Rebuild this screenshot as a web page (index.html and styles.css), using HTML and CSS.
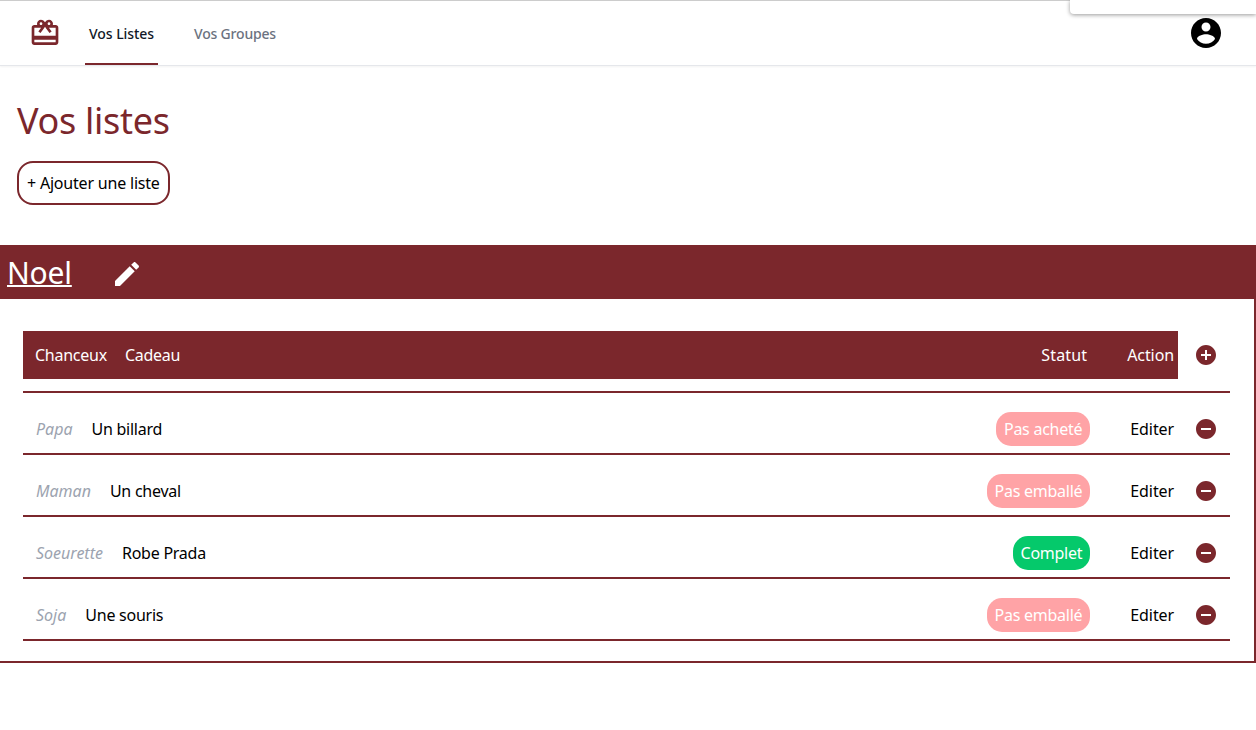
FILE: index.html
```html
<!DOCTYPE html>
<html lang="fr">
<head>
    <meta charset="UTF-8">
    <title>Vos listes</title>
    <link rel="stylesheet" href="styles.css">
</head>
<body>
    <div class="menu-popup"></div>

    <nav class="navbar">
        <svg class="logo" viewBox="0 0 24 24"><path d="M20 6h-2.18c.11-.31.18-.65.18-1 0-1.66-1.34-3-3-3-1.05 0-1.96.54-2.5 1.35l-.5.67-.5-.68C10.96 2.54 10.05 2 9 2 7.34 2 6 3.34 6 5c0 .35.07.69.18 1H4c-1.11 0-1.99.89-1.99 2L2 19c0 1.11.89 2 2 2h16c1.11 0 2-.89 2-2V8c0-1.11-.89-2-2-2zm-5-2c.55 0 1 .45 1 1s-.45 1-1 1-1-.45-1-1 .45-1 1-1zM9 4c.55 0 1 .45 1 1s-.45 1-1 1-1-.45-1-1 .45-1 1-1zm11 15H4v-2h16v2zm0-5H4V8h5.08L7 10.83 8.62 12 11 8.76l1-1.36 1 1.36L15.38 12 17 10.83 14.92 8H20v6z"/></svg>
        <a class="nav-link active" href="#">Vos Listes</a>
        <a class="nav-link" href="#">Vos Groupes</a>
        <svg class="account" viewBox="0 0 24 24"><path d="M12 2C6.48 2 2 6.48 2 12s4.48 10 10 10 10-4.48 10-10S17.52 2 12 2zm0 3c1.66 0 3 1.34 3 3s-1.34 3-3 3-3-1.34-3-3 1.34-3 3-3zm0 14.2c-2.5 0-4.71-1.28-6-3.22.03-1.99 4-3.08 6-3.08 1.99 0 5.97 1.09 6 3.08-1.29 1.94-3.5 3.22-6 3.22z"/></svg>
    </nav>

    <header class="page-head">
        <h1>Vos listes</h1>
        <button class="add-list">+ Ajouter une liste</button>
    </header>

    <section class="list">
        <div class="list-title">
            <a href="#">Noel</a>
            <svg class="edit" viewBox="0 0 24 24"><path d="M3 17.25V21h3.75L17.81 9.94l-3.75-3.75L3 17.25zM20.71 7.04c.39-.39.39-1.02 0-1.41l-2.34-2.34c-.39-.39-1.02-.39-1.41 0l-1.83 1.83 3.75 3.75 1.83-1.83z"/></svg>
        </div>
        <div class="list-body">
            <div class="head-line">
                <div class="table-head">
                    <span class="col-who">Chanceux</span>
                    <span class="col-gift">Cadeau</span>
                    <span class="col-status">Statut</span>
                    <span class="col-action">Action</span>
                </div>
                <svg class="round-icon" viewBox="0 0 24 24"><path d="M12 2C6.48 2 2 6.48 2 12s4.48 10 10 10 10-4.48 10-10S17.52 2 12 2zm5 11h-4v4h-2v-4H7v-2h4V7h2v4h4v2z"/></svg>
            </div>

            <div class="row">
                <span class="who">Papa</span>
                <span class="gift">Un billard</span>
                <span class="pill todo">Pas acheté</span>
                <a class="edit-link" href="#">Editer</a>
                <svg class="round-icon" viewBox="0 0 24 24"><path d="M12 2C6.48 2 2 6.48 2 12s4.48 10 10 10 10-4.48 10-10S17.52 2 12 2zm5 11H7v-2h10v2z"/></svg>
            </div>
            <div class="row">
                <span class="who">Maman</span>
                <span class="gift">Un cheval</span>
                <span class="pill todo">Pas emballé</span>
                <a class="edit-link" href="#">Editer</a>
                <svg class="round-icon" viewBox="0 0 24 24"><path d="M12 2C6.48 2 2 6.48 2 12s4.48 10 10 10 10-4.48 10-10S17.52 2 12 2zm5 11H7v-2h10v2z"/></svg>
            </div>
            <div class="row">
                <span class="who">Soeurette</span>
                <span class="gift">Robe Prada</span>
                <span class="pill done">Complet</span>
                <a class="edit-link" href="#">Editer</a>
                <svg class="round-icon" viewBox="0 0 24 24"><path d="M12 2C6.48 2 2 6.48 2 12s4.48 10 10 10 10-4.48 10-10S17.52 2 12 2zm5 11H7v-2h10v2z"/></svg>
            </div>
            <div class="row">
                <span class="who">Soja</span>
                <span class="gift">Une souris</span>
                <span class="pill todo">Pas emballé</span>
                <a class="edit-link" href="#">Editer</a>
                <svg class="round-icon" viewBox="0 0 24 24"><path d="M12 2C6.48 2 2 6.48 2 12s4.48 10 10 10 10-4.48 10-10S17.52 2 12 2zm5 11H7v-2h10v2z"/></svg>
            </div>
        </div>
    </section>
</body>
</html>
```

FILE: styles.css
```css
/* Base */
body { margin: 0; background-color: #fff; color: #000; font-family: "Noto Sans", sans-serif; font-size: 16px; letter-spacing: -0.25px; border-top: 1px solid #ccc; }
a { color: inherit; text-decoration: none; }

/* Navbar */
.navbar { display: flex; align-items: center; height: 64px; padding: 0 32px 0 29px; border-bottom: 1px solid #e5e7eb; box-shadow: 0 1px 2px rgba(0,0,0,0.05); }
.logo { width: 32px; height: 32px; fill: #7b272c; margin-right: 24px; }
.nav-link { display: flex; align-items: center; align-self: stretch; padding: 2px 4px 0; margin-right: 32px; border-bottom: 2px solid transparent; color: #6b7280; font-size: 14px; font-weight: 500; letter-spacing: -0.2px; }
.nav-link.active { color: #111827; border-bottom-color: #7b272c; letter-spacing: -0.05px; }
.account { width: 36px; height: 36px; margin-left: auto; fill: #000; }
.menu-popup { position: absolute; top: 0; right: 0; width: 186px; height: 14px; background-color: #fff; border-radius: 0 0 0 4px; box-shadow: 0 1px 4px rgba(0,0,0,0.4); }

/* Page head */
.page-head { padding: 30px 17px 40px; }
h1 { margin: 0 0 15px; color: #7b272c; font-size: 36px; font-weight: 400; line-height: 50px; letter-spacing: -0.3px; }
.add-list { display: block; height: 44px; padding: 0 8px; background-color: #fff; border: 2px solid #7b272c; border-radius: 16px; font-family: inherit; font-size: 16px; letter-spacing: -0.2px; color: #000; }

/* List */
.list-title { display: flex; align-items: center; height: 54px; padding-left: 7px; background-color: #7b272c; color: #fff; font-size: 30px; letter-spacing: -0.2px; }
.list-title a { text-decoration: underline; text-decoration-thickness: 2px; }
.edit { width: 32px; height: 32px; margin: 3px 0 0 39px; fill: #fff; }
.list-body { padding: 32px 24px 20px 23px; border-right: 2px solid #7b272c; border-bottom: 2px solid #7b272c; }

.head-line { display: flex; align-items: center; padding-bottom: 12px; border-bottom: 2px solid #7b272c; }
.table-head { display: flex; align-items: center; flex: 1; height: 48px; padding: 0 4px 0 12px; background-color: #7b272c; color: #fff; }
.col-who { margin-right: 18px; }
.col-status { margin-left: auto; margin-right: 40px; letter-spacing: 0.15px; }
.col-action { letter-spacing: -0.1px; }

.row { display: flex; align-items: center; height: 48px; padding: 12px 0 0 13px; border-bottom: 2px solid #7b272c; }
.who { margin-right: 19px; color: #9ca3af; font-style: italic; letter-spacing: 0; }
.pill { margin-left: auto; margin-right: 40px; padding: 0 8px; line-height: 34px; border-radius: 15px; color: #fff; }
.edit-link { letter-spacing: -0.1px; }
.todo { background-color: #ffa3a6; }
.done { background-color: #05c96b; }
.round-icon { flex: none; width: 24px; height: 24px; margin: 0 12px 0 20px; fill: #7b272c; }
.head-line .round-icon { margin-left: 16px; }
```
